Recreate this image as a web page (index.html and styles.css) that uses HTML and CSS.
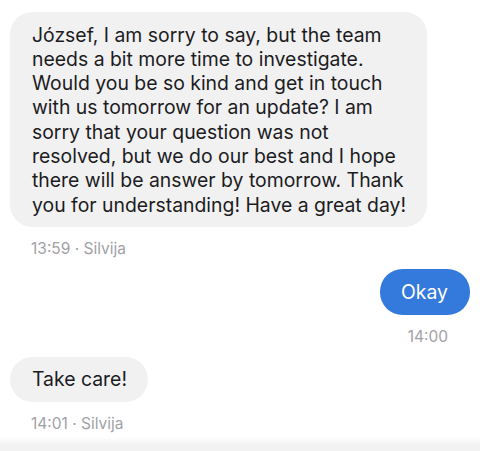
FILE: index.html
```html
<!DOCTYPE html>
<html lang="en">
<head>
<meta charset="utf-8">
<title>Chat</title>
<link rel="stylesheet" href="styles.css">
</head>
<body>
<main class="thread">
  <div class="group incoming">
    <div class="bubble">József, I am sorry to say, but the team<br>needs a bit more time to investigate.<br>Would you be so kind and get in touch<br>with us tomorrow for an update? I am<br>sorry that your question was not<br>resolved, but we do our best and I hope<br>there will be answer by tomorrow. Thank<br>you for understanding! Have a great day!</div>
    <div class="meta">13:59 · Silvija</div>
  </div>
  <div class="group outgoing">
    <div class="bubble">Okay</div>
    <div class="meta">14:00</div>
  </div>
  <div class="group incoming">
    <div class="bubble">Take care!</div>
    <div class="meta">14:01 · Silvija</div>
  </div>
</main>
<div class="composer-edge"></div>
</body>
</html>
```
FILE: styles.css
```css
html, body {
  margin: 0;
  padding: 0;
  background: #ffffff;
}

body {
  width: 480px;
  height: 451px;
  overflow: hidden;
  font-family: "Inter", "Liberation Sans", sans-serif;
  color: #1c1c1e;
}

.thread {
  display: flex;
  flex-direction: column;
  gap: 11px;
  padding: 12px 10px 0 10px;
}

.group {
  display: flex;
  flex-direction: column;
  gap: 12px;
}

.incoming {
  align-items: flex-start;
}

.outgoing {
  align-items: flex-end;
}

.bubble {
  font-size: 19.4px;
  line-height: 24.3px;
  padding: 10.5px 21px 10.5px 22px;
  border-radius: 22.5px;
  background: #f1f1f2;
  color: #1c1c1e;
}

.outgoing .bubble {
  background: #3479dc;
  color: #ffffff;
  padding: 10.5px 22px 10.5px 21px;
}

.meta {
  font-size: 15.5px;
  line-height: 19px;
  color: #a1a1a6;
  padding-left: 21px;
}

.outgoing .meta {
  padding-left: 0;
  padding-right: 22px;
}

.composer-edge {
  position: absolute;
  left: 0;
  right: 0;
  bottom: 0;
  height: 14px;
  background: linear-gradient(to bottom, #ffffff, #f2f2f3 60%, #f2f2f3);
}
```
